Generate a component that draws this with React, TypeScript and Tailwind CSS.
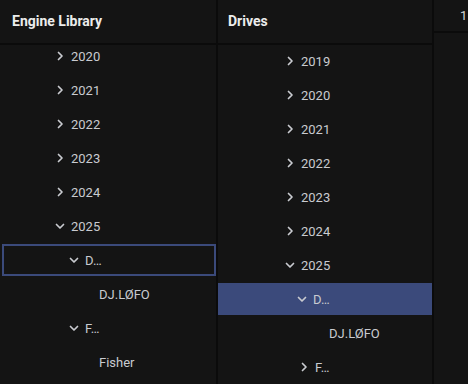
import React from "react";

type Row = { label: string; level: number; kind: "closed" | "open" | "leaf"; sel?: "outline" | "fill" };

const col1: Row[] = [
  { label: "2020", level: 1, kind: "closed" },
  { label: "2021", level: 1, kind: "closed" },
  { label: "2022", level: 1, kind: "closed" },
  { label: "2023", level: 1, kind: "closed" },
  { label: "2024", level: 1, kind: "closed" },
  { label: "2025", level: 1, kind: "open" },
  { label: "D…", level: 2, kind: "open", sel: "outline" },
  { label: "DJ.LØFO", level: 3, kind: "leaf" },
  { label: "F…", level: 2, kind: "open" },
  { label: "Fisher", level: 3, kind: "leaf" },
];

const col2: Row[] = [
  { label: "2019", level: 1, kind: "closed" },
  { label: "2020", level: 1, kind: "closed" },
  { label: "2021", level: 1, kind: "closed" },
  { label: "2022", level: 1, kind: "closed" },
  { label: "2023", level: 1, kind: "closed" },
  { label: "2024", level: 1, kind: "closed" },
  { label: "2025", level: 1, kind: "open" },
  { label: "D…", level: 2, kind: "open", sel: "fill" },
  { label: "DJ.LØFO", level: 3, kind: "leaf" },
  { label: "F…", level: 2, kind: "closed" },
];

function Chevron({ open }: { open: boolean }) {
  return (
    <svg width="10" height="10" viewBox="0 0 10 10" className="shrink-0">
      {open ? (
        <path d="M1.5 3.5 L5 7 L8.5 3.5" fill="none" stroke="#c9cbd0" strokeWidth="1.7" strokeLinecap="round" strokeLinejoin="round" />
      ) : (
        <path d="M3.5 1.5 L7 5 L3.5 8.5" fill="none" stroke="#c9cbd0" strokeWidth="1.7" strokeLinecap="round" strokeLinejoin="round" />
      )}
    </svg>
  );
}

function TreeRow({ row, base }: { row: Row; base: number }) {
  const pad = base + (row.level - 1) * 14;
  const cls =
    row.sel === "fill"
      ? "bg-[#3b4a7b]"
      : row.sel === "outline"
      ? "border-2 border-[#3b4a7b]"
      : "border-2 border-transparent";
  return (
    <div className="h-[34px] pt-[2px]">
      <div className={`h-[32px] flex items-center ${cls}`} style={{ paddingLeft: pad }}>
        <div className="w-[16px] flex items-center">
          {row.kind !== "leaf" && <Chevron open={row.kind === "open"} />}
        </div>
        <span className="text-[13px] text-[#c9cbd0] leading-none">{row.label}</span>
      </div>
    </div>
  );
}

export default function App() {
  return (
    <div
      className="w-[468px] h-[384px] bg-[#0b0b0b] flex overflow-hidden"
      style={{ fontFamily: "Roboto, 'Liberation Sans', sans-serif" }}
    >
      <div className="w-[216px] flex flex-col bg-[#141414]">
        <div className="h-[43px] flex items-center pl-[12px] shrink-0">
          <span className="text-[14px] font-bold text-[#ececec]">Engine Library</span>
        </div>
        <div className="h-[2px] bg-[#0b0b0b] shrink-0" />
        <div className="flex-1 overflow-hidden pl-[2px]">
          <div className="mt-[-7px]">
            {col1.map((r, i) => (
              <TreeRow key={i} row={r} base={51} />
            ))}
          </div>
        </div>
      </div>
      <div className="w-[2px] shrink-0" />
      <div className="w-[214px] flex flex-col bg-[#141414]">
        <div className="h-[43px] flex items-center pl-[10px] shrink-0">
          <span className="text-[14px] font-bold text-[#ececec]">Drives</span>
        </div>
        <div className="h-[2px] bg-[#0b0b0b] shrink-0" />
        <div className="flex-1 overflow-hidden">
          <div className="mt-[-2px]">
            {col2.map((r, i) => (
              <TreeRow key={i} row={r} base={65} />
            ))}
          </div>
        </div>
      </div>
      <div className="w-[2px] shrink-0" />
      <div className="flex-1 flex flex-col bg-[#141414]">
        <div className="h-[31px] flex items-center pl-[26px] shrink-0">
          <span className="text-[13px] text-[#d8d8d8]">1</span>
        </div>
        <div className="h-[2px] bg-[#0b0b0b] shrink-0" />
        <div className="flex-1" />
      </div>
    </div>
  );
}
